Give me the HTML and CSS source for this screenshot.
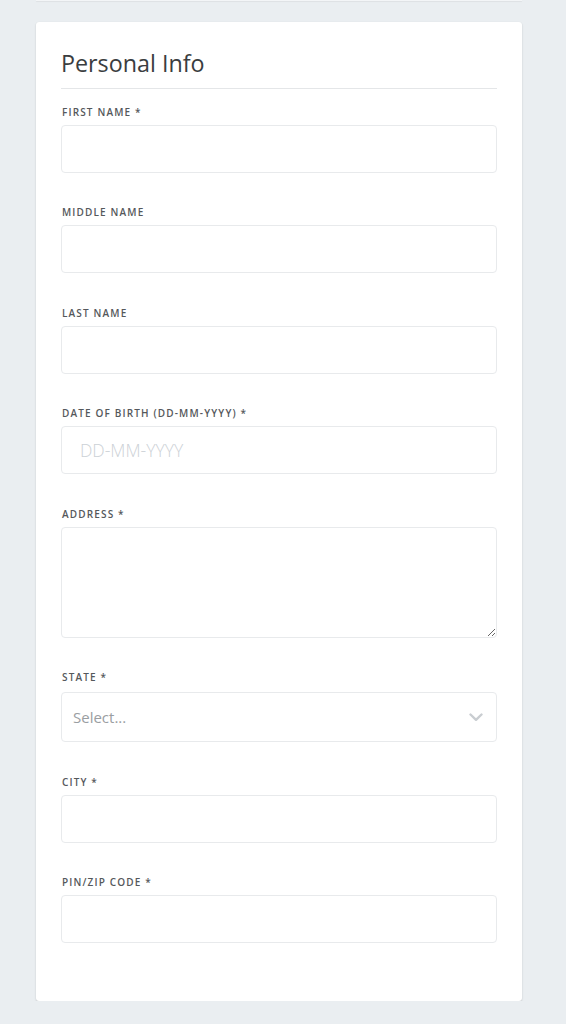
FILE: index.html
```html
<!DOCTYPE html>
<html lang="en">
<head>
<meta charset="utf-8">
<title>Personal Info</title>
<link rel="stylesheet" href="styles.css">
</head>
<body>
<div class="page">
  <div class="card-tail"></div>
  <section class="card">
    <h2 class="card-title">Personal Info</h2>
    <form class="form">
      <div class="field">
        <label class="label">First Name *</label>
        <input class="input" type="text">
      </div>
      <div class="field">
        <label class="label">Middle Name</label>
        <input class="input" type="text">
      </div>
      <div class="field">
        <label class="label">Last Name</label>
        <input class="input" type="text">
      </div>
      <div class="field">
        <label class="label">Date of Birth (DD-MM-YYYY) *</label>
        <input class="input date" type="text" placeholder="DD-MM-YYYY">
      </div>
      <div class="field">
        <label class="label">Address *</label>
        <textarea class="input textarea"></textarea>
      </div>
      <div class="field">
        <label class="label label-select">State *</label>
        <div class="select">
          <span class="select-value">Select...</span>
          <svg class="chevron" width="14" height="9" viewBox="0 0 14 9"><path d="M1.5 1.5 L7 6.8 L12.5 1.5" fill="none" stroke="#c9cdd1" stroke-width="2.4" stroke-linecap="round" stroke-linejoin="round"/></svg>
        </div>
      </div>
      <div class="field">
        <label class="label">City *</label>
        <input class="input" type="text">
      </div>
      <div class="field">
        <label class="label">Pin/Zip Code *</label>
        <input class="input" type="text">
      </div>
    </form>
  </section>
</div>
</body>
</html>
```

FILE: styles.css
```css
* { box-sizing: border-box; }
html, body {
  margin: 0;
  padding: 0;
  background: #eaeef1;
  font-family: "Open Sans", "Liberation Sans", sans-serif;
}
.page {
  width: 486px;
  margin-left: 36px;
  display: flex;
  flex-direction: column;
}
.card-tail {
  height: 1px;
  background: #f3f5f7;
  box-shadow: 0 1px 1px rgba(0, 0, 0, 0.06);
}
.card {
  margin-top: 21px;
  background: #fff;
  border-radius: 3px;
  box-shadow: 0 1px 2px rgba(0, 0, 0, 0.16), 0 0 1px rgba(0, 0, 0, 0.06);
  padding: 25px 25px 25px;
  height: 979px;
}
.card-title {
  margin: 0;
  font-size: 23.3px;
  line-height: 32px;
  font-weight: 400;
  color: #3a3d40;
  padding-bottom: 9px;
  border-bottom: 1px solid #e4e6e8;
}
.form {
  display: flex;
  flex-direction: column;
  padding-top: 15.6px;
}
.field {
  display: flex;
  flex-direction: column;
  margin-bottom: 32.5px;
}
.label {
  font-size: 10px;
  line-height: 14px;
  font-weight: 600;
  letter-spacing: 1.15px;
  text-transform: uppercase;
  color: #55585b;
  margin-bottom: 6px;
  padding-left: 1px;
}
.label-select { margin-bottom: 8px; }
.input {
  display: block;
  width: 100%;
  height: 48px;
  border: 1px solid #e8eaec;
  border-radius: 4px;
  background: #fff;
  font-family: "Open Sans", "Liberation Sans", sans-serif;
  font-size: 16px;
  padding: 0 18px;
  outline: none;
}
.input::placeholder {
  color: #ccd1d6;
  font-weight: 300;
}
.date { font-size: 17.5px; }
.textarea {
  height: 111px;
  resize: vertical;
}
.select {
  height: 50px;
  border: 1px solid #e8eaec;
  border-radius: 4px;
  display: flex;
  align-items: center;
  justify-content: space-between;
  padding: 0 13px 0 11px;
}
.select-value {
  font-size: 15px;
  color: #9a9ea2;
}
.chevron { display: block; }
```
